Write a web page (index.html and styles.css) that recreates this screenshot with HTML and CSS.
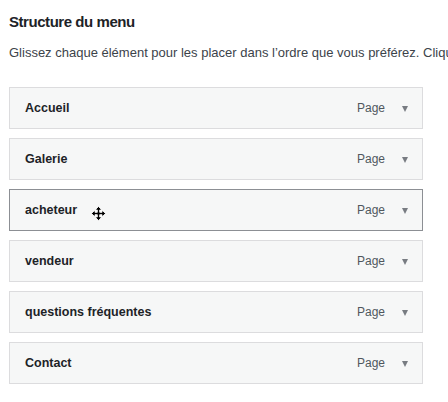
FILE: index.html
```html
<!DOCTYPE html>
<html lang="fr">
<head>
<meta charset="utf-8">
<link rel="stylesheet" href="styles.css">
</head>
<body>
<div class="page">
  <h2 class="title">Structure du menu</h2>
  <p class="desc">Glissez chaque élément pour les placer dans l’ordre que vous préférez. Cliquez sur la flèche à droite de l’élément pour afficher d’autres options de configuration.</p>
  <ul class="menu">
    <li class="item"><span class="label">Accueil</span><span class="type">Page</span><span class="arrow"></span></li>
    <li class="item"><span class="label">Galerie</span><span class="type">Page</span><span class="arrow"></span></li>
    <li class="item hover"><span class="label">acheteur</span><span class="type">Page</span><span class="arrow"></span>
      <svg class="cursor" width="15" height="15" viewBox="0 0 14 14">
        <path d="M7 0.5 L10.2 3.7 L8.1 3.7 L8.1 5.9 L10.3 5.9 L10.3 3.8 L13.5 7 L10.3 10.2 L10.3 8.1 L8.1 8.1 L8.1 10.3 L10.2 10.3 L7 13.5 L3.8 10.3 L5.9 10.3 L5.9 8.1 L3.7 8.1 L3.7 10.2 L0.5 7 L3.7 3.8 L3.7 5.9 L5.9 5.9 L5.9 3.7 L3.8 3.7 Z" fill="#000" stroke="#fff" stroke-width="0.8" stroke-linejoin="miter"/>
      </svg>
    </li>
    <li class="item"><span class="label">vendeur</span><span class="type">Page</span><span class="arrow"></span></li>
    <li class="item"><span class="label">questions fréquentes</span><span class="type">Page</span><span class="arrow"></span></li>
    <li class="item"><span class="label">Contact</span><span class="type">Page</span><span class="arrow"></span></li>
  </ul>
</div>
</body>
</html>
```
FILE: styles.css
```css
html, body {
  margin: 0;
  padding: 0;
  background: #fff;
  overflow: hidden;
}
.page {
  padding: 0 0 0 9px;
  font-family: "Liberation Sans", Arial, sans-serif;
  color: #1d2327;
  width: 439px;
  overflow: hidden;
}
.title {
  margin: 0;
  padding-top: 12px;
  font-size: 15px;
  line-height: 20px;
  font-weight: 700;
  letter-spacing: -0.45px;
  color: #1d2327;
}
.desc {
  margin: 13px 0 0;
  font-size: 13px;
  line-height: 16px;
  white-space: nowrap;
  color: #3c434a;
}
.menu {
  list-style: none;
  margin: 26px 0 0;
  padding: 0;
  width: 414px;
  display: flex;
  flex-direction: column;
  gap: 9px;
}
.item {
  position: relative;
  box-sizing: border-box;
  height: 42px;
  border: 1px solid #dcdcde;
  background: #f6f7f7;
  display: flex;
  align-items: center;
  padding: 0 14px 0 15px;
}
.item.hover {
  border-color: #8c8f94;
}
.label {
  flex: 1;
  font-size: 12.5px;
  font-weight: 700;
  color: #1d2327;
}
.type {
  font-size: 12px;
  color: #50575e;
  margin-right: 17px;
}
.arrow {
  width: 0;
  height: 0;
  border-left: 3.5px solid transparent;
  border-right: 3.5px solid transparent;
  border-top: 6px solid #787c82;
  margin-top: 1px;
}
.cursor {
  position: absolute;
  left: 81px;
  top: 16px;
}
```
